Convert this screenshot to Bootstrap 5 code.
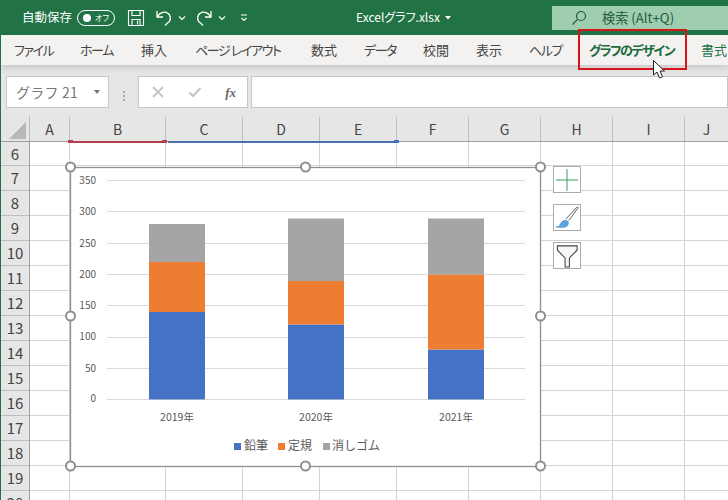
<!DOCTYPE html>
<html lang="ja">
<head>
<meta charset="utf-8">
<title>Excelグラフ.xlsx</title>
<link href="https://cdn.jsdelivr.net/npm/bootstrap@5.3.0/dist/css/bootstrap.min.css" rel="stylesheet">
<style>
html,body{width:728px;height:500px;overflow:hidden;margin:0}
body{font-family:"Noto Sans CJK JP","Noto Sans",sans-serif;font-feature-settings:"palt";background:#fff;color:#444;border-left:1px solid #217346;position:relative}
.app{width:727px;height:500px}
.titlebar{height:35px;background:#217346;color:#fff;font-size:12.5px;margin-left:-1px;width:728px;position:relative}
.titlebar .autosave{margin-left:22px;width:55px}
.toggle{width:38px;height:16px;border:1px solid #fff;border-radius:8px;font-size:8px;line-height:14px;padding-left:17px;position:relative}
.toggle::before{content:"";position:absolute;left:5px;top:3px;width:8px;height:8px;border-radius:50%;background:#fff}
.qa{margin-left:12px;gap:6px}
.qa .m5{margin-left:5px}
.doc{position:absolute;left:356px;top:7px;font-size:12px;line-height:20px}
.doc-caret{position:absolute;left:445px;top:16px}
.search{position:absolute;left:552px;top:6px;width:176px;height:24px;background:#9fcdb0;color:#215c3e;font-size:13.2px;line-height:24px;padding-left:50px}
.search svg{position:absolute;left:19px;top:4px}
.tabs{height:30px;background:#f3f2f1;font-size:13px;box-shadow:0 3px 6px rgba(0,0,0,.13);position:relative;z-index:2;white-space:nowrap;overflow:hidden}
.tabs .nav-link{padding:0;color:#444;line-height:30px;position:absolute;top:0}
.tabs .nav-link.kana{letter-spacing:-1.4px}
.tabs .nav-link.design{color:#1a6b40;font-weight:700;letter-spacing:-1.5px}
.tabs .nav-link.fmt{color:#217346}
.fbar{height:51px;background:#e6e6e6;padding:11px 0 0 5px}
.fbox{height:32px;background:#fff;border:1px solid #c6c6c6}
.namebox{width:103px;color:#777;font-size:14px;padding:0 8px 0 9px;font-feature-settings:normal;letter-spacing:.2px}
.caret{width:0;height:0;border-left:3.5px solid transparent;border-right:3.5px solid transparent;border-top:4px solid #777}
.dots{width:29px;gap:2px}
.dots i{width:2px;height:2px;background:#aaa;display:block}
.fbtns{width:110px;margin-right:3px;padding:0 11px 0 12px}
.fx{font-family:"Liberation Serif",serif;font-style:italic;font-weight:700;font-size:13px;color:#666;line-height:1}
.finput{flex:1}
.colhead{height:26px;background:#e6e6e6;border-bottom:1px solid #9f9f9f;font-size:14px;color:#444;position:relative}
.colhead .corner{width:29px;border-right:1px solid #bdbdbd;position:relative}
.corner::after{content:"";position:absolute;right:3px;bottom:2px;border-style:solid;border-width:0 0 17px 17px;border-color:transparent transparent #b9b9b9 transparent}
.colhead .c{text-align:center;line-height:24px;border-right:1px solid #c0c0c0;margin-top:1px}
.w-a{width:40px}.w-b{width:96px}.w-c{width:77px}.w-f{width:72px}
.sheet{height:358px;position:relative}
.rowhead{width:29px;background:#e6e6e6;border-right:1px solid #9f9f9f;font-size:15px;color:#444}
.rowhead div{height:25px;line-height:24px;text-align:center;border-bottom:1px solid #bdbdbd}
.rowhead div:first-child{height:24px}
.grid{flex:1;background-image:repeating-linear-gradient(to bottom,transparent 0,transparent 24px,#d4d4d4 24px,#d4d4d4 25px);background-position:0 -1px}
.grid div{border-right:1px solid #d4d4d4;height:100%}
.range{position:absolute;top:-1px;height:2px}
.range.r{left:67px;width:99px;background:#b0414b}
.range.b{left:167px;width:231px;background:#4a71a8}
.range i{position:absolute;top:-1px;width:5px;height:3px;display:block}
.range.r i{background:#b0414b}
.range.b i{background:#4472c4}
.chart{position:absolute;left:60px;top:15px}
.chart text{font-family:"Noto Sans CJK JP","Noto Sans",sans-serif;fill:#595959;font-feature-settings:normal}
.side{position:absolute;left:552px;top:24px;gap:11px}
.side .btn{width:28px;height:27px;padding:0;border:1px solid #ababab;border-radius:0;background:#fff;display:flex;align-items:center;justify-content:center}
.redbox{position:absolute;left:577px;top:29px;width:109px;height:41px;border:2px solid #d7141a;z-index:3;pointer-events:none}
.cursor{position:absolute;left:651px;top:59px;z-index:4}
</style>
</head>
<body>
<div class="app d-flex flex-column">
  <header class="titlebar d-flex align-items-center">
    <span class="autosave">自動保存</span>
    <span class="toggle">オフ</span>
    <div class="qa d-flex align-items-center">
      <svg width="18" height="18" viewBox="0 0 18 18" fill="none" stroke="#fff" stroke-width="1.1"><path d="M1.500 1.500h15v15h-15zM5 1.500v5h8v-5M5 16.500v-6h8v6M10.500 11.500v4"/></svg>
      <svg width="16" height="18" viewBox="0 0 16 18" class="m5" fill="none" stroke="#fff" stroke-width="1.300"><path d="M1 2v6h6M1.500 7.500C3.500 4 8 2 11.500 4c4 2.500 3.500 8 0 10L9 16.500"/></svg>
      <svg width="8" height="6" viewBox="0 0 8 6" fill="none" stroke="#fff" stroke-width="1.100"><path d="M1 1.500l3 3 3-3"/></svg>
      <svg width="16" height="18" viewBox="0 0 16 18" class="ms-1" fill="none" stroke="#fff" stroke-width="1.300"><path d="M15 2v6H9M14.500 7.500C12.500 4 8 2 4.500 4c-4 2.500-3.500 8 0 10L7 16.500"/></svg>
      <svg width="8" height="6" viewBox="0 0 8 6" fill="none" stroke="#fff" stroke-width="1.100"><path d="M1 1.500l3 3 3-3"/></svg>
      <svg width="8" height="8" viewBox="0 0 8 8" class="ms-2" fill="none" stroke="#fff" stroke-width="1.100"><path d="M1 1h6M1.500 4l2.500 2.500L6.500 4"/></svg>
    </div>
    <span class="doc">Excelグラフ.xlsx</span>
    <svg width="6" height="4" viewBox="0 0 6 4" class="doc-caret"><path d="M0 0h6L3 3.500z" fill="#fff"/></svg>
    <div class="search">
      <svg width="16" height="16" viewBox="0 0 16 16" fill="none" stroke="#215c3e" stroke-width="1.200"><circle cx="10" cy="6" r="4.500"/><path d="M6.800 9.200L1.500 14.500"/></svg>
      検索 (Alt+Q)
    </div>
  </header>

  <nav class="tabs nav">
    <a class="nav-link kana" style="left:13px">ファイル</a>
    <a class="nav-link kana" style="left:79px">ホーム</a>
    <a class="nav-link" style="left:140px">挿入</a>
    <a class="nav-link kana" style="left:194px">ページ レイアウト</a>
    <a class="nav-link" style="left:310px">数式</a>
    <a class="nav-link kana" style="left:363px">データ</a>
    <a class="nav-link" style="left:422px">校閲</a>
    <a class="nav-link" style="left:475px">表示</a>
    <a class="nav-link kana" style="left:528px">ヘルプ</a>
    <a class="nav-link design" style="left:588px">グラフのデザイン</a>
    <a class="nav-link fmt" style="left:700px">書式</a>
  </nav>

  <div class="fbar d-flex">
    <div class="fbox namebox d-flex align-items-center justify-content-between"><span>グラフ 21</span><span class="caret"></span></div>
    <div class="dots d-flex flex-column align-items-center justify-content-center"><i></i><i></i><i></i></div>
    <div class="fbox fbtns d-flex align-items-center justify-content-between">
      <svg width="14" height="14" viewBox="0 0 14 14" fill="none" stroke="#c4c4c4" stroke-width="1.800"><path d="M2 2l10 10M12 2L2 12"/></svg>
      <svg width="14" height="14" viewBox="0 0 14 14" fill="none" stroke="#c4c4c4" stroke-width="2"><path d="M1.500 7.500l3.500 3.500 7.500-8"/></svg>
      <span class="fx">fx</span>
    </div>
    <div class="fbox finput"></div>
  </div>

  <div class="colhead d-flex">
    <div class="corner"></div>
    <div class="c w-a">A</div><div class="c w-b">B</div><div class="c w-c">C</div><div class="c w-c">D</div><div class="c w-c">E</div>
    <div class="c w-f">F</div><div class="c w-f">G</div><div class="c w-f">H</div><div class="c w-f">I</div><div class="c flex-fill border-0">J</div>
  </div>

  <div class="sheet d-flex">
    <div class="rowhead">
      <div>6</div><div>7</div><div>8</div><div>9</div><div>10</div><div>11</div><div>12</div><div>13</div><div>14</div><div>15</div><div>16</div><div>17</div><div>18</div><div>19</div><div>20</div>
    </div>
    <div class="grid flex-fill d-flex">
      <div class="w-a"></div><div class="w-b"></div><div class="w-c"></div><div class="w-c"></div><div class="w-c"></div>
      <div class="w-f"></div><div class="w-f"></div><div class="w-f"></div><div class="w-f"></div><div class="flex-fill border-0"></div>
    </div>
    <span class="range r"><i class="start-0"></i><i class="end-0"></i></span><span class="range b"><i class="end-0"></i></span>

    <svg class="chart" width="490" height="320" viewBox="61 157 490 320">
      <rect x="70.500" y="167.500" width="470" height="299" fill="#fff" stroke="#8f8f8f" stroke-width="1.300"/>
      <g stroke="#d9d9d9" stroke-width="1">
        <path d="M107 180.500H525M107 211.500H525M107 243.500H525M107 274.500H525M107 305.500H525M107 337.500H525M107 368.500H525M107 399.500H525"/>
      </g>
      <g fill="#4472c4"><rect x="149" y="312" width="56" height="87.400"/><rect x="288" y="324.500" width="56" height="74.900"/><rect x="428" y="349.500" width="56" height="49.900"/></g>
      <g fill="#ed7d31"><rect x="149" y="262" width="56" height="50"/><rect x="288" y="281" width="56" height="43.500"/><rect x="428" y="274.500" width="56" height="75"/></g>
      <g fill="#a5a5a5"><rect x="149" y="224" width="56" height="38"/><rect x="288" y="218.500" width="56" height="62.500"/><rect x="428" y="218.500" width="56" height="56"/></g>
      <g font-size="10" text-anchor="end">
        <text x="96" y="184">350</text><text x="96" y="215">300</text><text x="96" y="246.500">250</text><text x="96" y="277.500">200</text><text x="96" y="309">150</text><text x="96" y="340">100</text><text x="96" y="371.500">50</text><text x="96" y="402">0</text>
      </g>
      <g font-size="10.500" text-anchor="middle">
        <text x="177" y="421">2019年</text><text x="316" y="421">2020年</text><text x="456" y="421">2021年</text>
      </g>
      <rect x="234" y="443" width="7" height="7" fill="#4472c4"/><text x="244" y="450" font-size="12">鉛筆</text>
      <rect x="278" y="443" width="7" height="7" fill="#ed7d31"/><text x="288" y="450" font-size="12">定規</text>
      <rect x="323" y="443" width="7" height="7" fill="#a5a5a5"/><text x="332" y="450" font-size="12">消しゴム</text>
      <g fill="#fff" stroke="#8f8f8f" stroke-width="2">
        <circle cx="70.500" cy="167" r="4.500"/><circle cx="305.500" cy="167" r="4.500"/><circle cx="540.500" cy="167" r="4.500"/>
        <circle cx="70.500" cy="316" r="4.500"/><circle cx="540.500" cy="316" r="4.500"/>
        <circle cx="70.500" cy="466" r="4.500"/><circle cx="305.500" cy="466" r="4.500"/><circle cx="540.500" cy="466" r="4.500"/>
      </g>
    </svg>

    <div class="side d-flex flex-column">
      <button class="btn" type="button" aria-label="グラフ要素"><svg width="22" height="22" viewBox="0 0 22 22"><path d="M0 10.500h22v1H0zM10.500 0h1v22h-1z" fill="#3b9a5e"/></svg></button>
      <button class="btn" type="button" aria-label="グラフスタイル"><svg width="26" height="25" viewBox="0 0 26 26"><path d="M12 14.500L23 2.500c1-.8 1.800-.2 1.300.8L15 16" fill="#fff" stroke="#555" stroke-width="1"/><path d="M1.500 23c3-.3 4-1.500 5-4 1-2 4-3.500 6-3 2 .8 2.500 2.500 1.500 4.500-1 2.500-4 3.500-12.500 2.500z" fill="#5ea4dc" stroke="#3f83bd" stroke-width=".6"/></svg></button>
      <button class="btn" type="button" aria-label="グラフフィルター"><svg width="24" height="25" viewBox="0 0 24 26"><path d="M2 3h20.500v4.500L14.500 15.500V25H10V15.500L2 7.500z" fill="#f7f7f7" stroke="#444" stroke-width="1.100"/></svg></button>
    </div>
  </div>
</div>

<div class="redbox"></div>
<svg class="cursor" width="14" height="22" viewBox="0 0 14 22"><path d="M1.500 1.500V16l3.500-3 2.500 6 3-1.300-2.500-5.700h4.500z" fill="#fff" stroke="#222" stroke-width="1"/></svg>
<script src="https://cdn.jsdelivr.net/npm/bootstrap@5.3.0/dist/js/bootstrap.bundle.min.js"></script>
</body>
</html>
